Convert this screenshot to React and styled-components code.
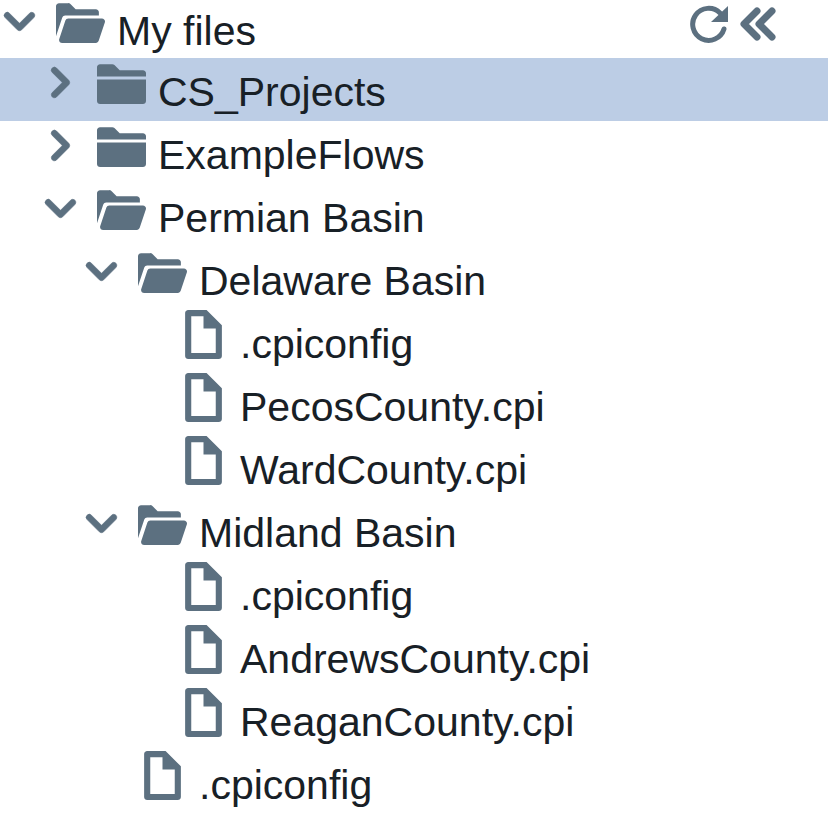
import React, { useState } from 'react';
import styled, { createGlobalStyle } from 'styled-components';

const GlobalStyle = createGlobalStyle`
  body {
    margin: 0;
    background: #ffffff;
    color: #182026;
    font-family: 'Liberation Sans', Arial, sans-serif;
  }
`;

const Panel = styled.main`
  display: flex;
  flex-direction: column;
  overflow: hidden;
`;

const Row = styled.div`
  display: flex;
  align-items: flex-start;
  height: 63px;
  padding-left: ${(props) => props.$depth * 41}px;
  background: ${(props) => (props.$selected ? '#bccde5' : 'transparent')};
  cursor: pointer;
`;

const RootRow = styled(Row)`
  height: 61px;
  margin-top: -3px;
`;

const iconButton = `
  display: flex;
  align-items: center;
  justify-content: center;
  height: 49px;
  padding: 0;
  border: 0;
  background: none;
  color: #5c7080;
  cursor: pointer;
`;

const Caret = styled.button`
  ${iconButton}
  width: 38px;
  margin-right: 18px;
`;

const CaretSpace = styled.span`
  width: 38px;
  margin-right: 18px;
`;

const Icon = styled.svg`
  display: block;
  flex: none;
  width: 49px;
  height: 49px;
  fill: #5c7080;
`;

const Label = styled.span`
  margin-left: 12px;
  padding-top: 10px;
  font-size: 41px;
  line-height: 48px;
  white-space: nowrap;
`;

const Actions = styled.div`
  display: flex;
  gap: 12px;
  margin-left: auto;
  margin-right: 52px;
`;

const Action = styled.button`
  ${iconButton}
  height: 53px;
`;

const ChevronDown = () => (
  <Icon viewBox="0 0 16 16" aria-hidden="true">
    <path
      d="M12 5c-.28 0-.53.11-.71.29L8 8.59l-3.29-3.3a1.003 1.003 0 00-1.42 1.42l4 4c.18.18.43.29.71.29s.53-.11.71-.29l4-4A1.003 1.003 0 0012 5z"
      stroke="#5c7080"
      strokeWidth="0.2"
    />
  </Icon>
);

const ChevronRight = () => (
  <Icon viewBox="0 0 16 16" aria-hidden="true">
    <path
      d="M10.71 7.29l-4-4a1.003 1.003 0 00-1.42 1.42L8.59 8 5.3 11.29c-.19.18-.3.43-.3.71a1.003 1.003 0 001.71.71l4-4c.18-.18.29-.43.29-.71s-.11-.53-.29-.71z"
      stroke="#5c7080"
      strokeWidth="0.2"
    />
  </Icon>
);

const FolderClosed = () => (
  <Icon viewBox="0 0 16 16" aria-hidden="true">
    <path d="M0 14c0 .55.45 1 1 1h14c.55 0 1-.45 1-1V7H0v7zM15 4H7.41L5.7 2.3A.965.965 0 005 2H1c-.55 0-1 .45-1 1v3h16V5c0-.55-.45-1-1-1z" />
  </Icon>
);

const FolderOpen = () => (
  <Icon viewBox="0 0 16 16" aria-hidden="true">
    <path d="M2.06 6.69c.14-.4.5-.69.94-.69h11V5c0-.55-.45-1-1-1H6.41l-1.7-1.71A.997.997 0 004 2H1c-.55 0-1 .45-1 1v9.84l2.05-6.15h.01zM16 8c0-.55-.45-1-1-1H4a.99.99 0 00-.94.69l-2 6c-.04.09-.06.2-.06.31 0 .55.45 1 1 1h11c.44 0 .81-.29.94-.69l2-6c.04-.09.06-.2.06-.31z" />
  </Icon>
);

const Document = () => (
  <Icon viewBox="0 0 16 16" aria-hidden="true">
    <path d="M9 0H3c-.55 0-1 .45-1 1v14c0 .55.45 1 1 1h10c.55 0 1-.45 1-1V5L9 0zm3 14H4V2h4v4h4v8z" />
  </Icon>
);

const RefreshIcon = () => (
  <svg width="38" height="38" viewBox="0 0 38 38" aria-hidden="true">
    <path
      d="M34 24A16 16 0 1 1 30 8"
      fill="none"
      stroke="currentColor"
      strokeWidth="5"
      strokeLinecap="round"
    />
    <path d="M38 1v16H21z" fill="currentColor" />
  </svg>
);

const CollapseIcon = () => (
  <svg width="36" height="34" viewBox="0 0 36 34" aria-hidden="true">
    <path
      d="M17 4L4 17l13 13M32 4L19 17l13 13"
      fill="none"
      stroke="currentColor"
      strokeWidth="7"
      strokeLinecap="round"
      strokeLinejoin="round"
    />
  </svg>
);

const files = [
  { id: 'cs', name: 'CS_Projects', children: [] },
  { id: 'flows', name: 'ExampleFlows', children: [] },
  {
    id: 'permian',
    name: 'Permian Basin',
    children: [
      {
        id: 'delaware',
        name: 'Delaware Basin',
        children: [
          { id: 'delaware-config', name: '.cpiconfig' },
          { id: 'pecos', name: 'PecosCounty.cpi' },
          { id: 'ward', name: 'WardCounty.cpi' },
        ],
      },
      {
        id: 'midland',
        name: 'Midland Basin',
        children: [
          { id: 'midland-config', name: '.cpiconfig' },
          { id: 'andrews', name: 'AndrewsCounty.cpi' },
          { id: 'reagan', name: 'ReaganCounty.cpi' },
        ],
      },
      { id: 'permian-config', name: '.cpiconfig' },
    ],
  },
];

const initialOpen = ['root', 'permian', 'delaware', 'midland'];

const App = () => {
  const [open, setOpen] = useState(initialOpen);
  const [selected, setSelected] = useState('cs');

  const toggle = (id) => {
    setOpen(open.includes(id) ? open.filter((item) => item !== id) : [...open, id]);
  };

  const renderNode = (node, depth) => {
    const isOpen = open.includes(node.id);
    return (
      <React.Fragment key={node.id}>
        <Row
          role="treeitem"
          aria-level={depth + 1}
          aria-selected={selected === node.id}
          $depth={depth}
          $selected={selected === node.id}
          onClick={() => setSelected(node.id)}
        >
          {node.children ? (
            <Caret aria-labelledby={node.id} aria-expanded={isOpen} onClick={() => toggle(node.id)}>
              {isOpen ? <ChevronDown /> : <ChevronRight />}
            </Caret>
          ) : (
            <CaretSpace />
          )}
          {!node.children && <Document />}
          {node.children && (isOpen ? <FolderOpen /> : <FolderClosed />)}
          <Label id={node.id}>{node.name}</Label>
        </Row>
        {isOpen && node.children.map((child) => renderNode(child, depth + 1))}
      </React.Fragment>
    );
  };

  const rootOpen = open.includes('root');

  return (
    <Panel>
      <GlobalStyle />
      <RootRow $depth={0}>
        <Caret aria-labelledby="root-label" aria-expanded={rootOpen} onClick={() => toggle('root')}>
          {rootOpen ? <ChevronDown /> : <ChevronRight />}
        </Caret>
        {rootOpen ? <FolderOpen /> : <FolderClosed />}
        <Label id="root-label">My files</Label>
        <Actions>
          <Action aria-label="Refresh" onClick={() => setOpen(initialOpen)}>
            <RefreshIcon />
          </Action>
          <Action aria-label="Collapse all" onClick={() => setOpen(['root'])}>
            <CollapseIcon />
          </Action>
        </Actions>
      </RootRow>
      <div role="tree" aria-labelledby="root-label">
        {rootOpen && files.map((node) => renderNode(node, 1))}
      </div>
    </Panel>
  );
};

export default App;
